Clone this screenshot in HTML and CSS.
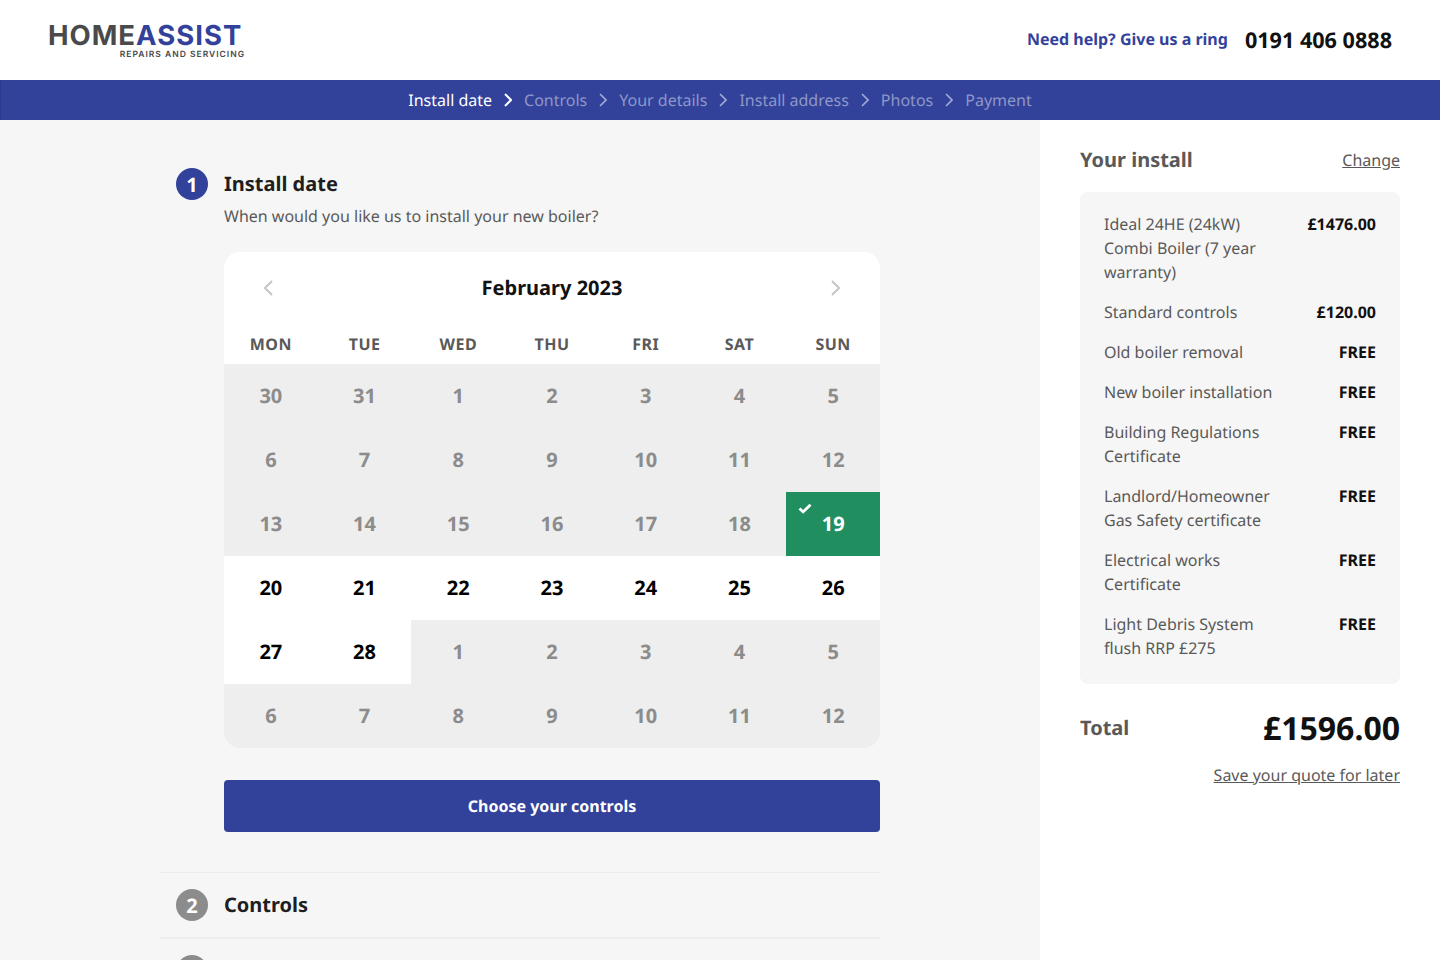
FILE: index.html
```html
<!DOCTYPE html>
<html lang="en">
<head>
  <meta charset="UTF-8">
  <meta name="viewport" content="width=device-width, initial-scale=1.0">
  <title>Install date</title>
  <link rel="stylesheet" href="styles.css">
</head>
<body>

<!-- Header -->
<header class="site-header">
  <div class="logo">
    <div class="logo-name"><span class="logo-home">HOME</span><span class="logo-assist">ASSIST</span></div>
    <div class="logo-sub">REPAIRS AND SERVICING</div>
  </div>
  <div class="help">
    <span class="help-text">Need help? Give us a ring</span>
    <span class="help-phone">0191 406 0888</span>
  </div>
</header>

<!-- Steps -->
<nav class="steps">
  <span class="step-link active">Install date</span>
  <svg class="step-arrow active" viewBox="0 0 8 14"><path d="M1 1l6 6-6 6"/></svg>
  <span class="step-link">Controls</span>
  <svg class="step-arrow" viewBox="0 0 8 14"><path d="M1 1l6 6-6 6"/></svg>
  <span class="step-link">Your details</span>
  <svg class="step-arrow" viewBox="0 0 8 14"><path d="M1 1l6 6-6 6"/></svg>
  <span class="step-link">Install address</span>
  <svg class="step-arrow" viewBox="0 0 8 14"><path d="M1 1l6 6-6 6"/></svg>
  <span class="step-link">Photos</span>
  <svg class="step-arrow" viewBox="0 0 8 14"><path d="M1 1l6 6-6 6"/></svg>
  <span class="step-link">Payment</span>
</nav>

<div class="page">
  <main class="main">

    <section class="section-open">
      <div class="section-head">
        <span class="num">1</span>
        <h2>Install date</h2>
      </div>
      <div class="section-body">
        <p class="question">When would you like us to install your new boiler?</p>

        <div class="calendar">
          <div class="cal-top">
            <svg class="cal-arrow" viewBox="0 0 10 16"><path d="M9 1L2 8l7 7"/></svg>
            <strong>February 2023</strong>
            <svg class="cal-arrow" viewBox="0 0 10 16"><path d="M1 1l7 7-7 7"/></svg>
          </div>
          <div class="cal-grid">
            <div class="dow">MON</div><div class="dow">TUE</div><div class="dow">WED</div><div class="dow">THU</div><div class="dow">FRI</div><div class="dow">SAT</div><div class="dow">SUN</div>

            <div class="day">30</div><div class="day">31</div><div class="day">1</div><div class="day">2</div><div class="day">3</div><div class="day">4</div><div class="day">5</div>
            <div class="day">6</div><div class="day">7</div><div class="day">8</div><div class="day">9</div><div class="day">10</div><div class="day">11</div><div class="day">12</div>
            <div class="day">13</div><div class="day">14</div><div class="day">15</div><div class="day">16</div><div class="day">17</div><div class="day">18</div>
            <div class="day selected">
              <svg class="tick" viewBox="0 0 14 11"><path d="M1.5 5.5l3.6 3.4L12.5 1.8"/></svg>
              19
            </div>
            <div class="day open">20</div><div class="day open">21</div><div class="day open">22</div><div class="day open">23</div><div class="day open">24</div><div class="day open">25</div><div class="day open">26</div>
            <div class="day open">27</div><div class="day open">28</div><div class="day">1</div><div class="day">2</div><div class="day">3</div><div class="day">4</div><div class="day">5</div>
            <div class="day">6</div><div class="day">7</div><div class="day">8</div><div class="day">9</div><div class="day">10</div><div class="day">11</div><div class="day">12</div>
          </div>
        </div>

        <button class="btn-next">Choose your controls</button>
      </div>
    </section>

    <section class="section-closed">
      <span class="num grey">2</span>
      <h2>Controls</h2>
    </section>
    <section class="section-closed">
      <span class="num grey">3</span>
      <h2>Your details</h2>
    </section>

  </main>

  <aside class="sidebar">
    <div class="side-head">
      <h3>Your install</h3>
      <a href="#" class="side-link">Change</a>
    </div>

    <div class="summary">
      <div class="line"><span class="line-name">Ideal 24HE (24kW) Combi Boiler (7 year warranty)</span><span class="line-price">£1476.00</span></div>
      <div class="line"><span class="line-name">Standard controls</span><span class="line-price">£120.00</span></div>
      <div class="line"><span class="line-name">Old boiler removal</span><span class="line-price">FREE</span></div>
      <div class="line"><span class="line-name">New boiler installation</span><span class="line-price">FREE</span></div>
      <div class="line"><span class="line-name">Building Regulations Certificate</span><span class="line-price">FREE</span></div>
      <div class="line"><span class="line-name">Landlord/Homeowner Gas Safety certificate</span><span class="line-price">FREE</span></div>
      <div class="line"><span class="line-name">Electrical works Certificate</span><span class="line-price">FREE</span></div>
      <div class="line"><span class="line-name">Light Debris System flush RRP £275</span><span class="line-price">FREE</span></div>
    </div>

    <div class="total">
      <span class="total-label">Total</span>
      <span class="total-price">£1596.00</span>
    </div>
    <div class="save"><a href="#" class="side-link">Save your quote for later</a></div>
  </aside>
</div>

</body>
</html>
```

FILE: styles.css
```css
* {
  box-sizing: border-box;
}

html, body {
  height: 960px;
  overflow: hidden;
}

body {
  margin: 0;
  background-color: #fff;
  color: #1e1e1e;
  font-family: "Noto Sans", sans-serif;
  font-size: 16px;
  text-rendering: geometricPrecision;
}

/* --- Header --- */
.site-header {
  height: 80px;
  padding: 0 48px;
  display: flex;
  justify-content: space-between;
  align-items: center;
  background-color: #fff;
}

.logo {
  width: 197px;
}

.logo-name {
  font-family: Inter, sans-serif;
  font-size: 27.5px;
  line-height: 28px;
  font-weight: 700;
  letter-spacing: 1px;
  white-space: nowrap;
}

.logo-home {
  color: #4a4a4a;
}

.logo-assist {
  color: #32429a;
}

.logo-sub {
  margin-top: 1px;
  font-family: Inter, sans-serif;
  font-size: 8.5px;
  line-height: 10px;
  font-weight: 600;
  letter-spacing: 1px;
  color: #4a4a4a;
  text-align: right;
  white-space: nowrap;
}

.help {
  display: flex;
  align-items: center;
  gap: 17px;
}

.help-text {
  padding-bottom: 2px;
  color: #32429a;
  font-weight: 700;
}

.help-phone {
  padding-top: 1px;
  color: #111;
  font-size: 21.6px;
  font-weight: 700;
}

/* --- Steps bar --- */
.steps {
  height: 40px;
  display: flex;
  justify-content: center;
  align-items: center;
  gap: 12px;
  background-color: #32429a;
  box-shadow: inset 1px 0 0 #2b3a8c;
  color: #8e97c8;
}

.step-link.active {
  color: #fff;
}

.step-arrow {
  width: 8px;
  height: 14px;
  fill: none;
  stroke: #a3abd4;
  stroke-width: 1.6;
}

.step-arrow.active {
  stroke: #fff;
  stroke-width: 2;
}

/* --- Layout --- */
.page {
  display: flex;
  height: 840px;
}

.main {
  width: 1040px;
  padding: 48px 160px 0;
  background-color: #f6f6f6;
}

.sidebar {
  width: 400px;
  padding: 24px 40px 0;
  background-color: #fff;
}

/* --- Sections --- */
.section-open {
  padding: 0 0 40px;
  border-bottom: 1px solid #ececec;
}

.section-head {
  height: 32px;
  padding-left: 16px;
  display: flex;
  align-items: center;
  gap: 16px;
}

.num {
  width: 32px;
  height: 32px;
  flex-shrink: 0;
  border-radius: 50%;
  display: flex;
  justify-content: center;
  align-items: center;
  background-color: #32429a;
  color: #fff;
  font-size: 20px;
  font-weight: 700;
}

.num.grey {
  background-color: #8c8c8c;
}

h2 {
  margin: 0;
  padding-bottom: 2px;
  font-size: 20px;
  font-weight: 700;
  color: #1e1e1e;
}

.section-body {
  padding-left: 64px;
}

.question {
  margin: 4px 0 24px;
  line-height: 24px;
  color: #595959;
}

/* --- Calendar --- */
.calendar {
  border-radius: 16px;
  overflow: hidden;
  background-color: #fff;
}

.cal-top {
  height: 72px;
  padding: 0 39px;
  display: flex;
  justify-content: space-between;
  align-items: center;
}

.cal-top strong {
  padding-bottom: 2px;
  font-size: 20px;
  font-weight: 700;
  color: #111;
}

.cal-arrow {
  width: 10px;
  height: 16px;
  fill: none;
  stroke: #c4c4c4;
  stroke-width: 2;
}

.cal-grid {
  display: grid;
  grid-template-columns: repeat(7, 1fr);
  grid-auto-rows: 64px;
  grid-template-rows: 40px;
}

.dow {
  display: flex;
  justify-content: center;
  align-items: center;
  font-weight: 700;
  letter-spacing: 0.5px;
  color: #595959;
}

.day {
  position: relative;
  padding-bottom: 2px;
  display: flex;
  justify-content: center;
  align-items: center;
  background-color: #eeeeee;
  color: #8c8c8c;
  font-size: 20px;
  font-weight: 700;
}

.day.open {
  background-color: #fff;
  color: #000;
}

.day.selected {
  background-color: #218e60;
  color: #fff;
}

.tick {
  position: absolute;
  top: 11px;
  left: 12px;
  width: 14px;
  height: 11px;
  fill: none;
  stroke: #fff;
  stroke-width: 2.8;
}

.btn-next {
  display: block;
  width: 100%;
  height: 52px;
  margin-top: 32px;
  border: none;
  border-radius: 4px;
  background-color: #32429a;
  color: #fff;
  font-family: inherit;
  font-size: 16px;
  font-weight: 700;
  text-rendering: geometricPrecision;
  cursor: pointer;
}

.section-closed {
  height: 66px;
  padding-left: 16px;
  display: flex;
  align-items: center;
  gap: 16px;
  border-bottom: 2px solid #ececec;
}

/* --- Sidebar --- */
.side-head {
  height: 32px;
  display: flex;
  justify-content: space-between;
  align-items: center;
}

.side-head h3 {
  margin: 0;
  padding-bottom: 2px;
  font-size: 20px;
  font-weight: 700;
  color: #595959;
}

.side-link {
  color: #595959;
  text-decoration: underline;
}

.summary {
  margin-top: 16px;
  padding: 20px 24px 24px;
  display: flex;
  flex-direction: column;
  gap: 16px;
  border-radius: 8px;
  background-color: #f6f6f6;
}

.line {
  display: flex;
  justify-content: space-between;
  gap: 24px;
  line-height: 24px;
  color: #595959;
}

.line-name {
  width: 170px;
}

.line-price {
  font-weight: 700;
  color: #111;
  white-space: nowrap;
}

.total {
  margin-top: 24px;
  height: 40px;
  display: flex;
  justify-content: space-between;
  align-items: center;
}

.total-label {
  padding-bottom: 2px;
  font-size: 20px;
  font-weight: 700;
  color: #595959;
}

.total-price {
  font-size: 32px;
  font-weight: 700;
  color: #111;
}

.save {
  margin-top: 15px;
  line-height: 24px;
  text-align: right;
}
```
